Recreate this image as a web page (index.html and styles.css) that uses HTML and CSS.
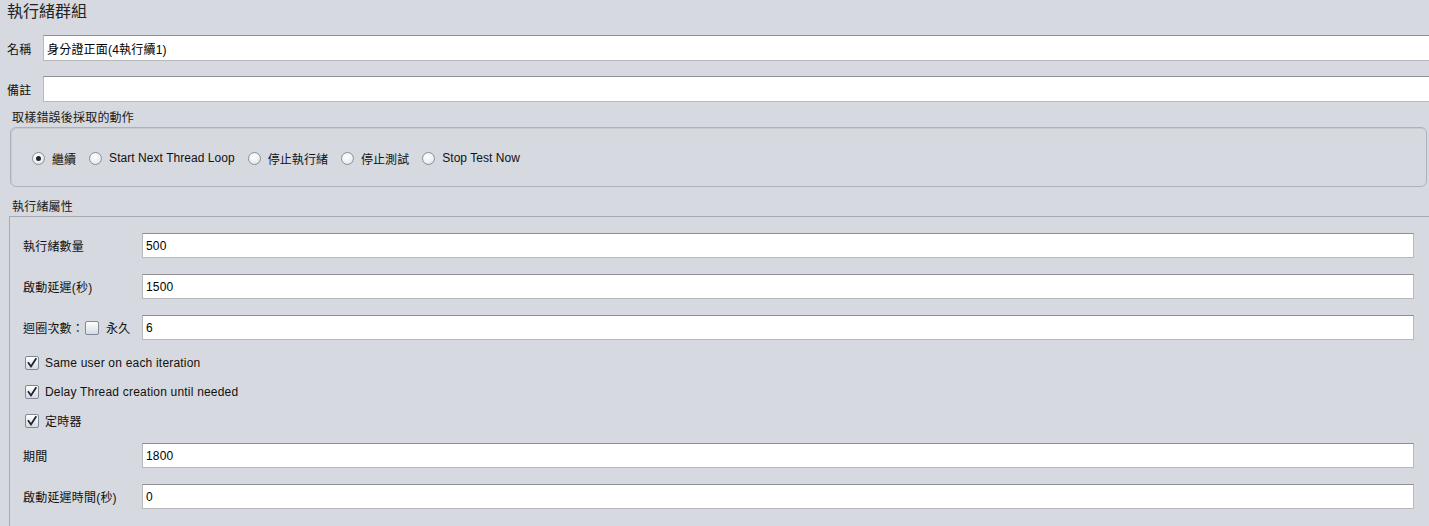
FILE: index.html
```html
<!DOCTYPE html>
<html lang="zh-Hant">
<head>
<meta charset="utf-8">
<title>執行緒群組</title>
<link rel="stylesheet" href="styles.css">
</head>
<body>
<div class="page">
  <div class="title">執行緒群組</div>

  <div class="field-row">
    <span class="lbl top-lbl">名稱</span>
    <div class="input open">身分證正面(4執行續1)</div>
  </div>
  <div class="field-row second">
    <span class="lbl top-lbl">備註</span>
    <div class="input open"></div>
  </div>

  <div class="group-label first-group">取樣錯誤後採取的動作</div>
  <div class="radio-box">
    <label class="radio-item"><span class="radio checked"></span><span>繼續</span></label>
    <label class="radio-item"><span class="radio"></span><span>Start Next Thread Loop</span></label>
    <label class="radio-item"><span class="radio"></span><span>停止執行緒</span></label>
    <label class="radio-item"><span class="radio"></span><span>停止測試</span></label>
    <label class="radio-item"><span class="radio"></span><span>Stop Test Now</span></label>
  </div>

  <div class="group-label second-group">執行緒屬性</div>
  <div class="props">
    <div class="prow">
      <span class="plbl">執行緒數量</span>
      <div class="input">500</div>
    </div>
    <div class="prow">
      <span class="plbl">啟動延遲(秒)</span>
      <div class="input">1500</div>
    </div>
    <div class="prow">
      <span class="plbl loop-lbl">迴圈次數：<span class="check"></span><span class="forever">永久</span></span>
      <div class="input">6</div>
    </div>
    <div class="checks">
      <label class="crow"><span class="check on"><svg viewBox="0 0 14 14" width="14" height="14"><path d="M3.5 7 L6 10.5 L10.8 3" fill="none" stroke="#1d2430" stroke-width="1.8" stroke-linecap="square"/></svg></span><span>Same user on each iteration</span></label>
      <label class="crow"><span class="check on"><svg viewBox="0 0 14 14" width="14" height="14"><path d="M3.5 7 L6 10.5 L10.8 3" fill="none" stroke="#1d2430" stroke-width="1.8" stroke-linecap="square"/></svg></span><span>Delay Thread creation until needed</span></label>
      <label class="crow"><span class="check on"><svg viewBox="0 0 14 14" width="14" height="14"><path d="M3.5 7 L6 10.5 L10.8 3" fill="none" stroke="#1d2430" stroke-width="1.8" stroke-linecap="square"/></svg></span><span>定時器</span></label>
    </div>
    <div class="prow">
      <span class="plbl">期間</span>
      <div class="input">1800</div>
    </div>
    <div class="prow">
      <span class="plbl">啟動延遲時間(秒)</span>
      <div class="input">0</div>
    </div>
  </div>
</div>
</body>
</html>
```

FILE: styles.css
```css
html, body {
  margin: 0;
  padding: 0;
  background: #d6d9df;
  overflow: hidden;
}
body {
  font-family: "Liberation Sans", "Noto Sans CJK TC", sans-serif;
  font-size: 12px;
  letter-spacing: 0.2px;
  color: #111;
  width: 1429px;
  height: 526px;
}
.page {
  display: flex;
  flex-direction: column;
}
.title {
  height: 35px;
  padding-left: 7px;
  font-size: 16px;
  line-height: 24px;
  letter-spacing: 0;
  color: #222;
}
.field-row {
  display: flex;
  align-items: center;
  height: 26px;
}
.field-row.second {
  margin-top: 15px;
}
.lbl {
  width: 36px;
  padding-left: 7px;
  flex: none;
}
.input {
  flex: 1;
  box-sizing: border-box;
  height: 26px;
  background: #fff;
  border: 1px solid #b7b9bd;
  border-top-color: #8e9094;
  padding-left: 3px;
  display: flex;
  align-items: center;
  color: #000;
  white-space: nowrap;
}
.input.open {
  border-right: none;
}
.group-label {
  padding-left: 12px;
  line-height: 16px;
  color: #1a1a1a;
}
.first-group {
  height: 25px;
  box-sizing: border-box;
  padding-top: 8px;
}
.second-group {
  height: 29px;
  box-sizing: border-box;
  padding-top: 12px;
}
.radio-box {
  height: 60px;
  box-sizing: border-box;
  margin: 0 2px 0 10px;
  border: 1px solid #aeb1b7;
  border-radius: 6px;
  box-shadow: inset 1px 1px 0 #c8cbd0;
  display: flex;
  align-items: center;
  padding: 2px 0 0 21px;
  gap: 13px;
  letter-spacing: 0.05px;
}
.radio-item {
  display: flex;
  align-items: center;
  gap: 7px;
}
.radio {
  width: 13px;
  height: 13px;
  box-sizing: border-box;
  border-radius: 50%;
  border: 1px solid #8c9097;
  background: radial-gradient(circle at 40% 35%, #ffffff 0%, #eef0f3 55%, #cfd3d9 100%);
  position: relative;
  flex: none;
}
.radio.checked::after {
  content: "";
  position: absolute;
  left: 3px;
  top: 3px;
  width: 5px;
  height: 5px;
  border-radius: 50%;
  background: #1e2530;
}
.props {
  box-sizing: border-box;
  margin-left: 9px;
  border-top: 1px solid #a6a9af;
  border-left: 1px solid #a6a9af;
  padding: 16px 15px 0 13px;
  display: flex;
  flex-direction: column;
  height: 310px;
}
.prow {
  display: flex;
  align-items: center;
  height: 25px;
  margin-bottom: 16px;
  flex: none;
}
.prow:last-child {
  margin-bottom: 0;
}
.prow .input {
  height: 25px;
}
.plbl {
  width: 119px;
  flex: none;
  display: flex;
  align-items: center;
}
.loop-lbl .check {
  margin-left: 1px;
}
.forever {
  margin-left: 7px;
}
.checks {
  display: flex;
  flex-direction: column;
  margin-top: -8px;
  margin-bottom: 8px;
}
.crow {
  display: flex;
  align-items: center;
  height: 29px;
  gap: 6px;
  padding-left: 2px;
}
.check {
  width: 14px;
  height: 14px;
  box-sizing: border-box;
  border: 1px solid #7f8896;
  border-radius: 2px;
  background: linear-gradient(#ffffff, #d6dbe2);
  display: inline-flex;
  flex: none;
  position: relative;
}
.check svg {
  position: absolute;
  left: -1px;
  top: -1px;
}
```
